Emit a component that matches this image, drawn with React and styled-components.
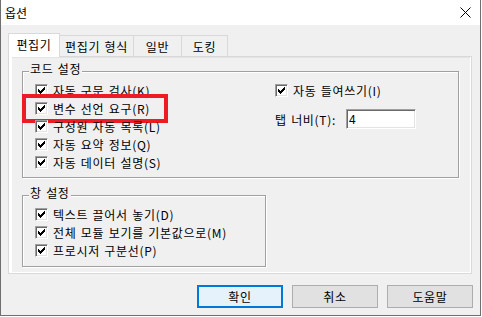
import React from "react";
import styled, { createGlobalStyle } from "styled-components";

const GlobalStyle = createGlobalStyle`
  html, body {
    margin: 0;
    padding: 0;
    background: #ffffff;
  }
  body {
    font-family: "Noto Sans CJK KR", "Noto Sans", sans-serif;
    font-size: 12px;
    letter-spacing: 0.7px;
    word-spacing: 1px;
    color: #000;
  }
`;

const Window = styled.div`
  width: 481px;
  height: 316px;
  box-sizing: border-box;
  border: 1px solid #6f6f6f;
  border-top: none;
  display: flex;
  flex-direction: column;
  background: #f0f0f0;
`;

const TitleBar = styled.div`
  height: 25px;
  flex: none;
  background: #fff;
  display: flex;
  align-items: center;
  justify-content: space-between;
  padding: 0 9px 0 4px;
  font-size: 12px;
  letter-spacing: 0;
`;

const CloseIcon = () => (
  <svg width="11" height="11" viewBox="0 0 11 11">
    <path d="M0.5 0.5 L10.5 10.5 M10.5 0.5 L0.5 10.5" stroke="#000" strokeWidth="1" />
  </svg>
);

const Body = styled.div`
  flex: 1;
  display: flex;
  flex-direction: column;
  padding: 8px 7px 0 7px;
`;

const TabStrip = styled.div`
  display: flex;
  align-items: flex-end;
  height: 23px;
  position: relative;
  z-index: 1;
`;

const Tab = styled.div`
  box-sizing: border-box;
  width: ${(p) => p.$w}px;
  height: ${(p) => (p.$active ? 24 : 21)}px;
  margin-left: -1px;
  margin-bottom: ${(p) => (p.$active ? -1 : 0)}px;
  border: 1px solid #d9d9d9;
  border-bottom: none;
  background: ${(p) => (p.$active ? "#ffffff" : "#f0f0f0")};
  display: flex;
  align-items: center;
  justify-content: center;
  padding-bottom: ${(p) => (p.$active ? 2 : 0)}px;
  position: relative;
  z-index: ${(p) => (p.$active ? 2 : 1)};
  white-space: nowrap;

  &:first-child {
    margin-left: 0;
  }
`;

const Panel = styled.div`
  width: 464px;
  height: 218px;
  box-sizing: border-box;
  border: 1px solid #d9d9d9;
  background: #fff;
  padding: 0 1px 1px 3px;
  display: flex;
`;

const Page = styled.div`
  flex: 1;
  background: #f0f0f0;
  border-top: 1px solid #e3e3e3;
  padding: 13px 0 0 10px;
  display: flex;
  flex-direction: column;
`;

const Group = styled.div`
  box-sizing: border-box;
  position: relative;
  width: ${(p) => p.$w}px;
  height: ${(p) => p.$h}px;
  margin-top: ${(p) => p.$mt || 0}px;
  border: 1px solid #a0a0a0;
  box-shadow: inset 1px 1px 0 #fff, 1px 1px 0 #fff;
  padding: 9px 0 0 12px;
`;

const Caption = styled.span`
  position: absolute;
  left: 6px;
  top: -10px;
  padding: 0 1px;
  line-height: 14px;
  background: #f0f0f0;
`;

const Columns = styled.div`
  display: grid;
  grid-template-columns: 240px 1fr;
`;

const Stack = styled.div`
  display: flex;
  flex-direction: column;
`;

const Row = styled.div`
  position: relative;
  height: 18px;
  display: flex;
  align-items: center;
  gap: 5px;
  white-space: nowrap;
`;

const Highlight = styled.div`
  position: absolute;
  left: -13px;
  top: -5px;
  width: 146px;
  height: 29px;
  box-sizing: border-box;
  border: 4px solid #ed1c24;
  pointer-events: none;
`;

const Box = styled.span`
  box-sizing: border-box;
  width: 13px;
  height: 13px;
  flex: none;
  background: #fff;
  border: 1px solid;
  border-color: #a0a0a0 #fff #fff #a0a0a0;
  box-shadow: inset 1px 1px 0 #696969, inset -1px -1px 0 #e3e3e3;
  display: flex;
`;

const CHECK = [
  [6], [5, 6], [0, 4, 5, 6], [0, 1, 3, 4, 5], [0, 1, 2, 3, 4], [1, 2, 3], [2],
];

const CheckMark = () => (
  <svg width="11" height="11" viewBox="0 0 11 11" shapeRendering="crispEdges">
    {CHECK.flatMap((cols, r) =>
      cols.map((c) => <rect key={`${r}-${c}`} x={c + 2} y={r + 2} width="1" height="1" fill="#000" />)
    )}
  </svg>
);

const Check = ({ label, highlight }) => (
  <Row>
    <Box>
      <CheckMark />
    </Box>
    <span>{label}</span>
    {highlight && <Highlight />}
  </Row>
);

const FieldRow = styled.div`
  display: flex;
  align-items: center;
  gap: 10px;
  margin-top: 10px;
  white-space: nowrap;
`;

const TextBox = styled.div`
  box-sizing: border-box;
  width: 70px;
  height: 20px;
  background: #fff;
  border: 1px solid;
  border-color: #a0a0a0 #fff #fff #a0a0a0;
  box-shadow: inset 1px 1px 0 #696969, inset -1px -1px 0 #e3e3e3;
  padding: 0 0 0 2px;
  line-height: 17px;
`;

const ButtonBar = styled.div`
  display: flex;
  justify-content: flex-end;
  gap: 9px;
  margin-top: 11px;
`;

const Button = styled.div`
  box-sizing: border-box;
  width: 86px;
  height: 23px;
  display: flex;
  align-items: center;
  justify-content: center;
  background: ${(p) => (p.$default ? "#e5f1fb" : "#e1e1e1")};
  border: 1px solid ${(p) => (p.$default ? "#0078d7" : "#adadad")};
  box-shadow: ${(p) => (p.$default ? "inset 0 0 0 1px #0078d7" : "none")};
`;

const tabs = [
  { label: "편집기", w: 52, active: true },
  { label: "편집기 형식", w: 75 },
  { label: "일반", w: 49 },
  { label: "도킹", w: 47 },
];

const codeOptions = [
  "자동 구문 검사(K)",
  "변수 선언 요구(R)",
  "구성원 자동 목록(L)",
  "자동 요약 정보(Q)",
  "자동 데이터 설명(S)",
];

const windowOptions = [
  "텍스트 끌어서 놓기(D)",
  "전체 모듈 보기를 기본값으로(M)",
  "프로시저 구분선(P)",
];

const App = () => (
  <>
    <GlobalStyle />
    <Window>
      <TitleBar>
        <span>옵션</span>
        <CloseIcon />
      </TitleBar>
      <Body>
        <TabStrip>
          {tabs.map((t) => (
            <Tab key={t.label} $w={t.w} $active={t.active}>
              {t.label}
            </Tab>
          ))}
        </TabStrip>
        <Panel>
          <Page>
            <Group $w={437} $h={107}>
              <Caption>코드 설정</Caption>
              <Columns>
                <Stack>
                  {codeOptions.map((o, i) => (
                    <Check key={o} label={o} highlight={i === 1} />
                  ))}
                </Stack>
                <Stack>
                  <Check label="자동 들여쓰기(I)" />
                  <FieldRow>
                    <span>탭 너비(T):</span>
                    <TextBox>4</TextBox>
                  </FieldRow>
                </Stack>
              </Columns>
            </Group>
            <Group $w={244} $h={72} $mt={17}>
              <Caption>창 설정</Caption>
              <Stack>
                {windowOptions.map((o) => (
                  <Check key={o} label={o} />
                ))}
              </Stack>
            </Group>
          </Page>
        </Panel>
        <ButtonBar>
          <Button $default>확인</Button>
          <Button>취소</Button>
          <Button>도움말</Button>
        </ButtonBar>
      </Body>
    </Window>
  </>
);

export default App;
